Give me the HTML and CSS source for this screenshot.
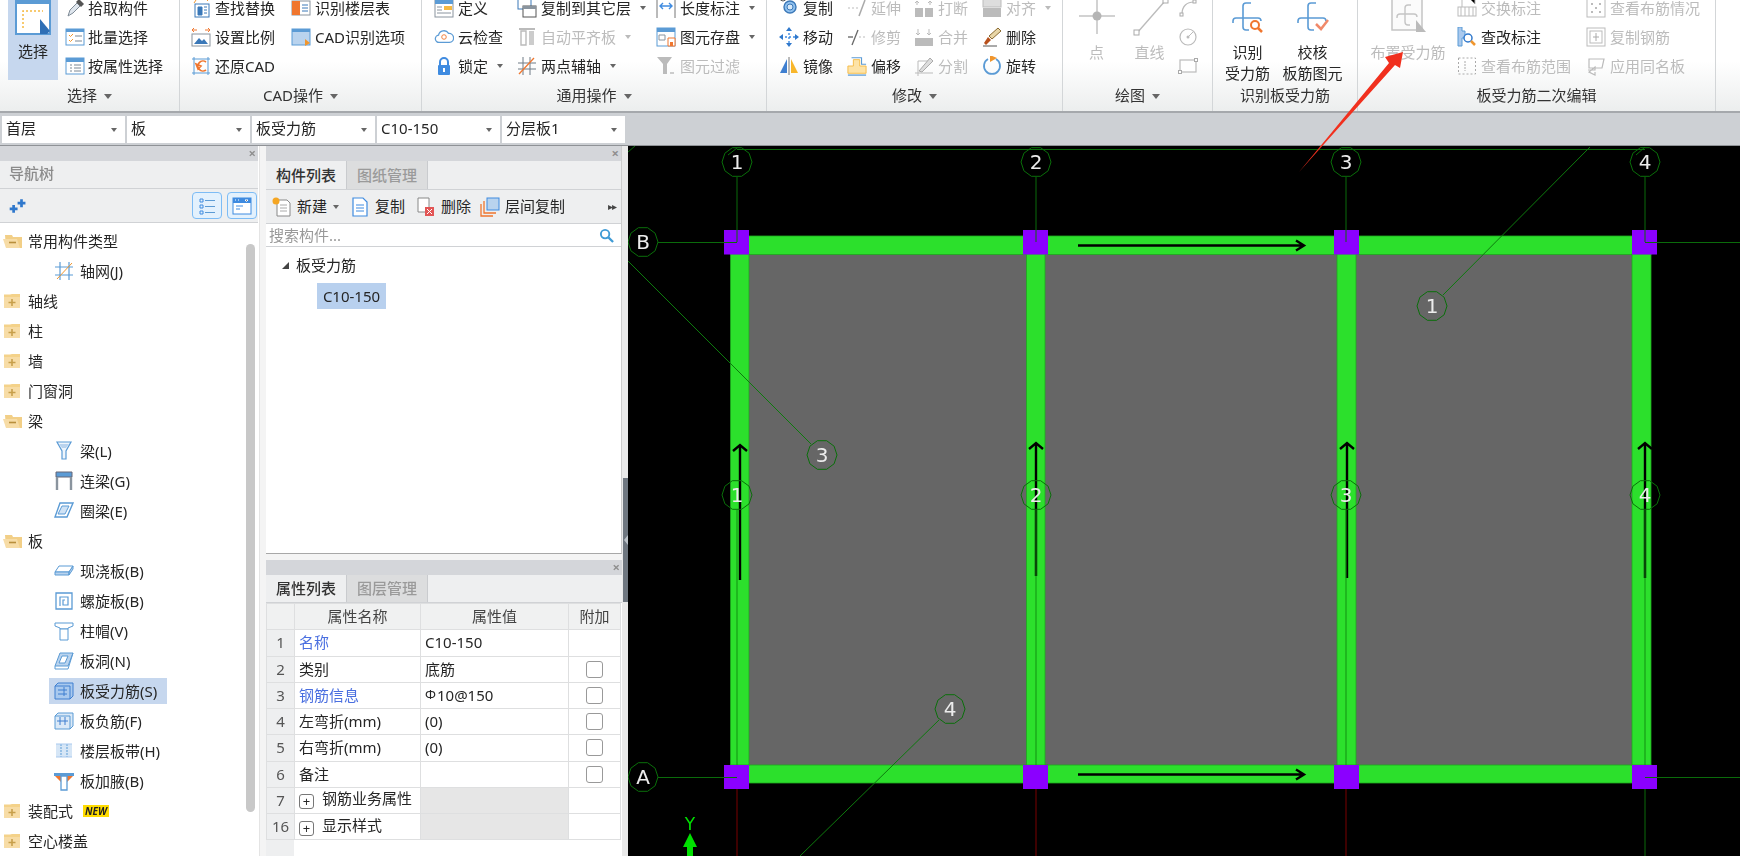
FILE: index.html
```html
<!DOCTYPE html>
<html lang="zh-CN">
<head>
<meta charset="utf-8">
<title>板受力筋</title>
<link rel="stylesheet" href="styles.css">
</head>
<body>
<svg class="sprite" width="0" height="0" aria-hidden="true">
<defs>
<symbol id="select" viewBox="0 0 36 36"><path d="M1-4h34v38H1z" fill="#fff" stroke="#5b9bd5" stroke-width="2"/><path d="M1-2h34v6H1z" fill="#5b9bd5"/><path d="M8 28V11h20" fill="none" stroke="#f5b942" stroke-width="1.5" stroke-dasharray="2 2"/><path d="M25 19l10 12-3 3h-7z" fill="#2f6fb5"/></symbol>
<symbol id="pick" viewBox="0 0 20 20"><path d="M3 18l2-6 7-7 3 3-7 7z" fill="#dfe6ee" stroke="#7f8b96"/><path d="M11 4l3-3 5 5-3 3z" fill="#555"/></symbol>
<symbol id="batch" viewBox="0 0 20 20"><rect x="1" y="2" width="18" height="16" fill="#fff" stroke="#5b9bd5"/><path d="M1 2h18v3H1z" fill="#5b9bd5"/><path d="M4 8l1.5 1.5L8 7M4 13l1.5 1.5L8 12" fill="none" stroke="#f0962e"/><path d="M10 9h7M10 14h7" stroke="#7b8793"/></symbol>
<symbol id="attr" viewBox="0 0 20 20"><rect x="1" y="2" width="18" height="16" fill="#fff" stroke="#5b9bd5"/><path d="M1 2h18v4H1z" fill="#5b9bd5"/><path d="M5 9h2M9 9h7M5 12h2M9 12h7M5 15h2M9 15h7" stroke="#7b8793"/></symbol>
<symbol id="find" viewBox="0 0 20 20"><path d="M5 1h14M3 5l2-3M15 1l2 2" stroke="#f0962e"/><rect x="4" y="6" width="14" height="13" fill="#fff" stroke="#3b78b8"/><path d="M7 9h4v8H7zM13 9h3M13 12h3M13 15h3" fill="#3b78b8" stroke="#3b78b8"/></symbol>
<symbol id="scale" viewBox="0 0 20 20"><path d="M1 3h5M3 1l-2 2 2 2M19 3h-5M17 1l2 2-2 2" fill="none" stroke="#f0762e"/><rect x="1" y="7" width="18" height="12" fill="#fff" stroke="#8a949e"/><path d="M3 17l5-6 3 3 2-2 4 5z" fill="#3b78b8"/></symbol>
<symbol id="restore" viewBox="0 0 20 20"><path d="M3 1v18M17 1v18M1 3h18M1 17h18" stroke="#5b9bd5"/><path d="M15 6a5 5 0 1 0 0 8M5 8l2 5 3-3z" fill="none" stroke="#f0762e" stroke-width="1.6"/></symbol>
<symbol id="floor" viewBox="0 0 20 20"><rect x="1" y="3" width="18" height="14" fill="#fff" stroke="#8a949e"/><rect x="1" y="3" width="8" height="14" fill="#f0762e"/><path d="M11 7h6M11 10h6M11 13h6" stroke="#3b78b8"/></symbol>
<symbol id="cadopt" viewBox="0 0 20 20"><rect x="1" y="2" width="18" height="16" fill="#b9d3ee" stroke="#5b9bd5"/><path d="M1 2h18v3H1z" fill="#5b9bd5"/><path d="M14 12l5 4-5 3z" fill="#f0962e"/></symbol>
<symbol id="define" viewBox="0 0 20 20"><rect x="1" y="1" width="18" height="18" fill="#fff" stroke="#8a949e"/><path d="M1 1h18v5H1z" fill="#5b9bd5"/><path d="M10 8h8v4h-8z" fill="#f5b942"/><path d="M3 9h5M3 12h5M3 15h14" stroke="#8a949e"/></symbol>
<symbol id="cloud" viewBox="0 0 22 20"><path d="M6 16a4 4 0 0 1-1-8 6 6 0 0 1 11-2 5 5 0 0 1 1 10z" fill="#fff" stroke="#5b9bd5" stroke-width="1.4"/><circle cx="11" cy="10" r="2.5" fill="none" stroke="#f0762e"/></symbol>
<symbol id="lock" viewBox="0 0 20 20"><path d="M6 9V6a4 4 0 0 1 8 0v3" fill="none" stroke="#3f8be0" stroke-width="2"/><rect x="4" y="9" width="12" height="10" rx="1" fill="#3f8be0"/><path d="M10 12v4" stroke="#fff" stroke-width="2"/></symbol>
<symbol id="copylayer" viewBox="0 0 20 20"><rect x="1" y="-2" width="13" height="13" fill="#fff" stroke="#3b78b8"/><rect x="6" y="8" width="13" height="11" fill="#fff" stroke="#555"/><path d="M6 8h13v3H6z" fill="#8a949e"/></symbol>
<symbol id="alignp" viewBox="0 0 20 20"><path d="M2 2h16" stroke="#bbb" stroke-width="2"/><path d="M4 4h5v14H4z" fill="none" stroke="#bbb" stroke-width="1.4"/><path d="M12 4h5v14h-5z" fill="#ccc"/></symbol>
<symbol id="twopoint" viewBox="0 0 20 20"><path d="M6 1v18M13 1v18M1 7h18M1 13h18" stroke="#6f7a85"/><path d="M2 18L17 2" stroke="#f0762e" stroke-width="1.3"/></symbol>
<symbol id="length" viewBox="0 0 20 20"><path d="M1 0v20M19 0v20" stroke="#777"/><path d="M4 8h12M7 5L4 8l3 3M13 5l3 3-3 3" fill="none" stroke="#3f8be0" stroke-width="1.4"/></symbol>
<symbol id="save" viewBox="0 0 20 20"><rect x="1" y="1" width="18" height="18" fill="#fff" stroke="#5b9bd5"/><path d="M1 1h18v4H1z" fill="#5b9bd5"/><path d="M3 8h6v5H3z" fill="none" stroke="#8a949e"/><path d="M12 11h7v8h-7z" fill="#fff" stroke="#f0762e"/><path d="M14 15h3v4h-3z" fill="#f0762e"/></symbol>
<symbol id="filter" viewBox="0 0 20 20"><path d="M1 1h15l-5 7v10H7V8z" fill="#bbb"/><path d="M14 17h4" stroke="#ccc" stroke-width="2"/></symbol>
<symbol id="copy" viewBox="0 0 20 20"><circle cx="4" cy="0" r="3" fill="none" stroke="#555"/><circle cx="11" cy="9" r="6" fill="#8fc0ee" stroke="#3b78b8" stroke-width="1.4"/><circle cx="11" cy="9" r="3" fill="#d6e8f8" stroke="#3b78b8"/><path d="M12 -1l3 3" stroke="#555"/></symbol>
<symbol id="move" viewBox="0 0 20 20"><path d="M10 2v16M2 10h16" stroke="#3f8be0" stroke-dasharray="2 2" stroke-width="1.4"/><path d="M10 0l3 4H7zM10 20l3-4H7zM0 10l4-3v6zM20 10l-4-3v6z" fill="#2f78cc"/></symbol>
<symbol id="mirror" viewBox="0 0 20 20"><path d="M1 17L8 3v14z" fill="#3f7fd0"/><path d="M12 3l7 14h-7z" fill="#f8b62b"/><path d="M10 1v18" stroke="#777"/></symbol>
<symbol id="extend" viewBox="0 0 20 20"><path d="M1 10h10" stroke="#bbb" stroke-dasharray="2 2"/><path d="M12 18L18 2" stroke="#aaa" stroke-width="1.5"/></symbol>
<symbol id="trim" viewBox="0 0 20 20"><path d="M1 10h5" stroke="#555" stroke-width="1.2"/><path d="M5 18L11 3" stroke="#666" stroke-width="1.3"/><path d="M12 10h7" stroke="#bbb" stroke-dasharray="2 2"/></symbol>
<symbol id="offset" viewBox="0 0 22 20"><path d="M7 3h7v7h7v8H1v-8h6z" fill="#fde3a7" stroke="#f5b942"/><path d="M5 1h11v7h5" fill="none" stroke="#5b9bd5" stroke-width="1.2"/><path d="M1 20h20" stroke="#5b9bd5" stroke-width="1.4"/></symbol>
<symbol id="break" viewBox="0 0 20 20"><path d="M1 10h8v9H1zM11 10h8v9h-8z" fill="#bbb"/><path d="M3 7V3M1 5l2-2 2 2M16 7V3M14 5l2-2 2 2" fill="none" stroke="#bbb"/></symbol>
<symbol id="merge" viewBox="0 0 20 20"><path d="M1 11h18v8H1z" fill="#bbb"/><path d="M4 2v6M2 6l2 2 2-2M15 2v6M13 6l2 2 2-2" fill="none" stroke="#bbb"/></symbol>
<symbol id="split" viewBox="0 0 20 20"><path d="M1 17h18M4 20V5l12 0" fill="none" stroke="#bbb"/><path d="M5 15L16 2l3 3L8 16z" fill="#ddd" stroke="#aaa"/></symbol>
<symbol id="alignr" viewBox="0 0 20 20"><rect x="1" y="-3" width="18" height="12" fill="#ddd" stroke="#bbb"/><rect x="1" y="10" width="18" height="9" fill="#bbb"/></symbol>
<symbol id="del" viewBox="0 0 20 20"><path d="M2 16l4-6 3 3-5 5z" fill="#b8501c"/><path d="M7 9L16 1l3 3-9 8z" fill="#e8d6a8" stroke="#8a6a30"/><path d="M1 19h14" stroke="#555"/></symbol>
<symbol id="rotate" viewBox="0 0 20 20"><path d="M6 3a8 8 0 1 0 8 0" fill="none" stroke="#5b9bd5" stroke-width="1.8"/><path d="M8-1l7 3-7 4z" fill="#f0962e"/></symbol>
<symbol id="point" viewBox="0 0 40 40"><path d="M20 0v36M2 18h36" stroke="#c4c4c4" stroke-width="1.5"/><circle cx="20" cy="18" r="4.5" fill="#b5b5b5"/></symbol>
<symbol id="sline" viewBox="0 0 40 40"><path d="M7 35L35 3" stroke="#bbb" stroke-width="1.3"/><rect x="4" y="32" width="5" height="5" fill="#fff" stroke="#aaa"/><rect x="33" y="0" width="5" height="5" fill="#fff" stroke="#aaa"/></symbol>
<symbol id="arcs" viewBox="0 0 20 20"><path d="M4 16C4 8 9 4 16 4" fill="none" stroke="#bbb" stroke-width="1.2"/><rect x="2" y="15" width="3" height="3" fill="#fff" stroke="#aaa"/><rect x="15" y="2" width="3" height="3" fill="#fff" stroke="#aaa"/></symbol>
<symbol id="circ" viewBox="0 0 20 20"><circle cx="10" cy="10" r="8" fill="none" stroke="#bbb" stroke-width="1.2"/><circle cx="10" cy="10" r="1.5" fill="#bbb"/><path d="M10 10l5-5" stroke="#bbb"/></symbol>
<symbol id="rrect" viewBox="0 0 20 20"><rect x="2" y="4" width="16" height="12" fill="#fff" stroke="#bbb" stroke-width="1.2"/><rect x="0.5" y="14.5" width="3" height="3" fill="#fff" stroke="#aaa"/><rect x="16.5" y="2.5" width="3" height="3" fill="#fff" stroke="#aaa"/></symbol>
<symbol id="recog" viewBox="0 0 34 34"><path d="M20 3h-5a3 3 0 0 0-3 3v21a3 3 0 0 0 3 3h3M2 23v-2a3 3 0 0 1 3-3h22a3 3 0 0 1 3 3" fill="none" stroke="#5b9bd5" stroke-width="1.6"/></symbol>
<symbol id="layout" viewBox="0 0 36 36"><rect x="2" y="1" width="30" height="31" fill="#fbfbfb" stroke="#c5c5c5" stroke-width="1.5"/><g fill="none" stroke="#c5c5c5" stroke-width="1.4"><path d="M21 7h-3a3 3 0 0 0-3 3v14a3 3 0 0 0 3 3h2M7 20v-1a3 3 0 0 1 3-3h14a3 3 0 0 1 3 3"/></g><path d="M26 22l10 12H26z" fill="#bbb"/></symbol>
<symbol id="swap" viewBox="0 0 20 20"><rect x="1" y="9" width="18" height="9" fill="#fff" stroke="#bbb"/><path d="M4 9v9M8 9v9M12 9v9M16 9v9M5 1v8M13 1h5v5" stroke="#bbb"/></symbol>
<symbol id="editmark" viewBox="0 0 20 20"><path d="M1 0h4v4h3v7H5v8H1z" fill="#a9c9ee" stroke="#5b9bd5"/><circle cx="11" cy="11" r="4" fill="#fff" stroke="#2f78cc" stroke-width="1.5"/><path d="M14 14l4 4" stroke="#f0962e" stroke-width="2.5"/></symbol>
<symbol id="range" viewBox="0 0 20 20"><rect x="1.5" y="2" width="17" height="16" fill="none" stroke="#aaa" stroke-dasharray="2 2"/><path d="M8 5v10" stroke="#aaa" stroke-dasharray="2 1"/></symbol>
<symbol id="view" viewBox="0 0 20 20"><rect x="1" y="1" width="18" height="18" fill="#fff" stroke="#bbb"/><path d="M5 5h2v2H5zM13 5h2v2h-2zM9 9h2v2H9zM5 13h2v2H5zM13 13h2v2h-2z" fill="#bbb"/></symbol>
<symbol id="copyrebar" viewBox="0 0 20 20"><rect x="1" y="1" width="18" height="18" fill="#fff" stroke="#bbb"/><rect x="4" y="4" width="12" height="12" fill="none" stroke="#bbb"/><path d="M10 6v8M7 10h6" stroke="#aaa"/></symbol>
<symbol id="apply" viewBox="0 0 20 20"><path d="M3 3h15l-2 9H3zM2 14h7v-3l-6 5 6 3v-3" fill="#fff" stroke="#bbb" stroke-width="1.2"/></symbol>
<symbol id="plus2" viewBox="0 0 16 16"><path d="M5 7v7M1.500 10.500h7M12 2v7M8.500 5.500h7" stroke="#2f78cc" stroke-width="2.400"/></symbol>
<symbol id="listv" viewBox="0 0 20 20"><path d="M3 3h3v3H3zM3 9h3v3H3zM3 15h3v3H3z" fill="none" stroke="#3f8be0"/><path d="M8 4.500h10M8 10.500h10M8 16.500h10" stroke="#5b9bd5"/></symbol>
<symbol id="winv" viewBox="0 0 20 20"><rect x="1" y="2" width="18" height="16" fill="#fff" stroke="#3f8be0"/><path d="M1 2h18v5H1z" fill="#3f8be0"/><path d="M4 10h7M4 13h4" stroke="#3f8be0"/><path d="M3 4h1M6 4h1M13 4h3l-1.500 1.500z" stroke="#fff"/></symbol>
<symbol id="fopen" viewBox="0 0 20 16"><path d="M2 2h7l1 2h9v11H3z" fill="#f2cf87"/><path d="M0 6h14l3 9H3z" fill="#f7dca6"/><path d="M6 9.500h7" stroke="#b98f3c" stroke-width="1.6"/></symbol>
<symbol id="fclosed" viewBox="0 0 18 16"><path d="M1 3V1.500h6L9 1h8v14H1z" fill="#f4d28a"/><path d="M1 4h16v11H1z" fill="#f7dca6"/><path d="M9 6v7M5.500 9.500h7" stroke="#c79f4b" stroke-width="1.6"/></symbol>
<symbol id="t-grid" viewBox="0 0 20 20"><path d="M6 1v18M15 1v18M1 6h18M1 14h18" stroke="#5b9bd5" stroke-width="1.2"/><path d="M3 18L18 2" stroke="#f0962e"/></symbol>
<symbol id="t-beam" viewBox="0 0 20 20"><path d="M3 1h14l-5 9v8H8v-8z" fill="#eef5fc" stroke="#5b9bd5" stroke-width="1.2"/><path d="M5 3h10l-3 4H8z" fill="#b9d3ee"/></symbol>
<symbol id="t-lintel" viewBox="0 0 20 20"><path d="M2 1h16v5H2z" fill="#5b9bd5" stroke="#667"/><path d="M3 6v13M17 6v13" stroke="#8a949e" stroke-width="2.4"/></symbol>
<symbol id="t-ring" viewBox="0 0 20 20"><path d="M6 2h13l-6 14H1z" fill="#fff" stroke="#5b9bd5" stroke-width="1.4"/><path d="M8 5h7l-4 8H4z" fill="#cfe2f5" stroke="#5b9bd5"/></symbol>
<symbol id="t-slab" viewBox="0 0 20 20"><path d="M5 5h14l-4 6H1z" fill="#fff" stroke="#5b9bd5"/><path d="M1 11h14v3H1zM15 11l4-6v3l-4 6z" fill="#b9d3ee" stroke="#5b9bd5"/></symbol>
<symbol id="t-spiral" viewBox="0 0 20 20"><path d="M2 2h16v16H2z" fill="#fff" stroke="#5b9bd5" stroke-width="1.3"/><path d="M6 15V6h8v8H9V9h2" fill="none" stroke="#5b9bd5" stroke-width="1.2"/></symbol>
<symbol id="t-cap" viewBox="0 0 20 20"><path d="M1 2h18v3l-5 2v1H6V7L1 5z" fill="#fff" stroke="#5b9bd5"/><path d="M6 8h8v11H6z" fill="#fff" stroke="#5b9bd5"/></symbol>
<symbol id="t-hole" viewBox="0 0 20 20"><path d="M6 2h13l-5 13H1z" fill="#b9d3ee" stroke="#5b9bd5"/><path d="M8 5h6l-3 7H5z" fill="#fff" stroke="#5b9bd5"/><path d="M1 15v3h13l5-16" fill="none" stroke="#5b9bd5"/></symbol>
<symbol id="t-main" viewBox="0 0 20 20"><path d="M1 5l3-3h15v13l-3 3H1z" fill="#a9c9ee" stroke="#3f7fd0"/><path d="M1 5h15v13" fill="none" stroke="#3f7fd0"/><path d="M4 9h9M4 13h9M10 6v9" stroke="#3f7fd0"/></symbol>
<symbol id="t-neg" viewBox="0 0 20 20"><path d="M1 5l3-3h15v13l-3 3H1z" fill="#dbe9f7" stroke="#5b9bd5"/><path d="M1 5h15v13" fill="none" stroke="#5b9bd5"/><path d="M6 6v8M11 6v8M3 10h11" stroke="#3f7fd0"/></symbol>
<symbol id="t-strip" viewBox="0 0 20 20"><path d="M2 3h16v13H2z" fill="#d6e6f6"/><path d="M7 3v13M13 3v13" stroke="#5b9bd5" stroke-dasharray="2 1"/><path d="M2 3h16M2 16h16" stroke="#a9c9ee"/></symbol>
<symbol id="t-haunch" viewBox="0 0 20 20"><path d="M0 2h20v3H0z" fill="#5b9bd5"/><path d="M1 5h18l-6 6V5H7v6z" fill="#f0762e"/><path d="M7 5h6v14H7z" fill="#fff" stroke="#5b9bd5" stroke-width="1.3"/></symbol>
<symbol id="n-new" viewBox="0 0 20 20"><path d="M5 3h10l3 3v13H5z" fill="#fff" stroke="#888"/><path d="M8 8h7M8 11h7M8 14h7" stroke="#aaa"/><circle cx="4" cy="4" r="3.500" fill="#f5a623"/></symbol>
<symbol id="n-copy" viewBox="0 0 20 20"><path d="M3 1h10l4 4v14H3z" fill="#fff" stroke="#3f8be0" stroke-width="1.2"/><path d="M6 8h8M6 11h8M6 14h8" stroke="#3f8be0"/></symbol>
<symbol id="n-del" viewBox="0 0 20 20"><path d="M2 1h11v14H2z" fill="#fff" stroke="#888"/><rect x="9" y="10" width="9" height="9" fill="#e25555"/><path d="M11 12l5 5M16 12l-5 5" stroke="#fff"/></symbol>
<symbol id="n-layer" viewBox="0 0 20 20"><path d="M1 7v12h12M4 4v12h12" fill="none" stroke="#f0762e" stroke-width="1.3"/><rect x="7" y="1" width="12" height="12" fill="#b9d3ee" stroke="#3f8be0"/></symbol>
<symbol id="search" viewBox="0 0 16 16"><circle cx="6.500" cy="6.500" r="4.500" fill="none" stroke="#3f9bd5" stroke-width="2"/><path d="M10 10l5 5" stroke="#3f9bd5" stroke-width="2.400"/></symbol>
<symbol id="bubble" viewBox="-16 -16 32 32"><polygon points="15,0 12.100,8.800 4.600,14.300 -4.600,14.300 -12.100,8.800 -15,0 -12.100,-8.800 -4.600,-14.300 4.600,-14.300 12.100,-8.800" fill="none" stroke="#0a6f0a"/></symbol>
</defs>
</svg>

<div class="app">
  <header class="ribbon">
    <section class="group g1">
      <div class="body">
        <div class="bigsel"><svg class="selicon"><use href="#select"/></svg><span>选择</span></div>
        <div class="cols">
          <div class="col">
            <div class="item"><svg class="ic"><use href="#pick"/></svg>拾取构件</div>
            <div class="item"><svg class="ic"><use href="#batch"/></svg>批量选择</div>
            <div class="item"><svg class="ic"><use href="#attr"/></svg>按属性选择</div>
          </div>
        </div>
      </div>
      <div class="label">选择<i class="caret"></i></div>
    </section>
    <section class="group g2">
      <div class="body">
        <div class="cols">
          <div class="col w100">
            <div class="item"><svg class="ic"><use href="#find"/></svg>查找替换</div>
            <div class="item"><svg class="ic"><use href="#scale"/></svg>设置比例</div>
            <div class="item"><svg class="ic"><use href="#restore"/></svg>还原CAD</div>
          </div>
          <div class="col">
            <div class="item"><svg class="ic"><use href="#floor"/></svg>识别楼层表</div>
            <div class="item"><svg class="ic"><use href="#cadopt"/></svg>CAD识别选项</div>
          </div>
        </div>
      </div>
      <div class="label">CAD操作<i class="caret"></i></div>
    </section>
    <section class="group g3">
      <div class="body">
        <div class="cols">
          <div class="col w83">
            <div class="item"><svg class="ic"><use href="#define"/></svg>定义</div>
            <div class="item"><svg class="ic"><use href="#cloud"/></svg>云检查</div>
            <div class="item"><svg class="ic"><use href="#lock"/></svg>锁定<i class="caret sm"></i></div>
          </div>
          <div class="col w139">
            <div class="item"><svg class="ic"><use href="#copylayer"/></svg>复制到其它层<i class="caret sm"></i></div>
            <div class="item off"><svg class="ic"><use href="#alignp"/></svg>自动平齐板<i class="caret sm"></i></div>
            <div class="item"><svg class="ic"><use href="#twopoint"/></svg>两点辅轴<i class="caret sm"></i></div>
          </div>
          <div class="col">
            <div class="item"><svg class="ic"><use href="#length"/></svg>长度标注<i class="caret sm"></i></div>
            <div class="item"><svg class="ic"><use href="#save"/></svg>图元存盘<i class="caret sm"></i></div>
            <div class="item off"><svg class="ic"><use href="#filter"/></svg>图元过滤</div>
          </div>
        </div>
      </div>
      <div class="label">通用操作<i class="caret"></i></div>
    </section>
    <section class="group g4">
      <div class="body">
        <div class="cols">
          <div class="col w68">
            <div class="item"><svg class="ic"><use href="#copy"/></svg>复制</div>
            <div class="item"><svg class="ic"><use href="#move"/></svg>移动</div>
            <div class="item"><svg class="ic"><use href="#mirror"/></svg>镜像</div>
          </div>
          <div class="col w67">
            <div class="item off"><svg class="ic"><use href="#extend"/></svg>延伸</div>
            <div class="item off"><svg class="ic"><use href="#trim"/></svg>修剪</div>
            <div class="item"><svg class="ic"><use href="#offset"/></svg>偏移</div>
          </div>
          <div class="col w68">
            <div class="item off"><svg class="ic"><use href="#break"/></svg>打断</div>
            <div class="item off"><svg class="ic"><use href="#merge"/></svg>合并</div>
            <div class="item off"><svg class="ic"><use href="#split"/></svg>分割</div>
          </div>
          <div class="col">
            <div class="item off"><svg class="ic"><use href="#alignr"/></svg>对齐<i class="caret sm"></i></div>
            <div class="item"><svg class="ic"><use href="#del"/></svg>删除</div>
            <div class="item"><svg class="ic"><use href="#rotate"/></svg>旋转</div>
          </div>
        </div>
      </div>
      <div class="label">修改<i class="caret"></i></div>
    </section>
    <section class="group g5">
      <div class="body">
        <div class="big off w53"><svg class="bigic"><use href="#point"/></svg><span>点</span></div>
        <div class="big off w53"><svg class="bigic"><use href="#sline"/></svg><span>直线</span></div>
        <div class="col small">
          <div class="item"><svg class="ic"><use href="#arcs"/></svg></div>
          <div class="item"><svg class="ic"><use href="#circ"/></svg></div>
          <div class="item"><svg class="ic"><use href="#rrect"/></svg></div>
        </div>
      </div>
      <div class="label">绘图<i class="caret"></i></div>
    </section>
    <section class="group g6">
      <div class="body">
        <div class="big w65"><svg class="bigic"><use href="#recog"/><circle cx="24" cy="25" r="4" fill="#fff" stroke="#f0762e" stroke-width="2"/><path d="M27 28l4 4" stroke="#f0762e" stroke-width="2.500"/></svg><span>识别<br>受力筋</span></div>
        <div class="big w65"><svg class="bigic"><use href="#recog"/><path d="M20 24l5 5 7-9" fill="none" stroke="#f0896a" stroke-width="2.500"/></svg><span>校核<br>板筋图元</span></div>
      </div>
      <div class="label">识别板受力筋</div>
    </section>
    <section class="group g7">
      <div class="body">
        <div class="big off w80"><svg class="bigic"><use href="#layout"/></svg><span>布置受力筋</span></div>
        <div class="cols">
          <div class="col w129">
            <div class="item off"><svg class="ic"><use href="#swap"/></svg>交换标注</div>
            <div class="item"><svg class="ic"><use href="#editmark"/></svg>查改标注</div>
            <div class="item off"><svg class="ic"><use href="#range"/></svg>查看布筋范围</div>
          </div>
          <div class="col">
            <div class="item off"><svg class="ic"><use href="#view"/></svg>查看布筋情况</div>
            <div class="item off"><svg class="ic"><use href="#copyrebar"/></svg>复制钢筋</div>
            <div class="item off"><svg class="ic"><use href="#apply"/></svg>应用同名板</div>
          </div>
        </div>
      </div>
      <div class="label">板受力筋二次编辑</div>
    </section>
  </header>

  <div class="selbar">
    <div class="drop">首层<i class="caret sm"></i></div>
    <div class="drop">板<i class="caret sm"></i></div>
    <div class="drop">板受力筋<i class="caret sm"></i></div>
    <div class="drop">C10-150<i class="caret sm"></i></div>
    <div class="drop">分层板1<i class="caret sm"></i></div>
  </div>

  <main class="work">
    <aside class="nav">
      <div class="titlebar"><span class="close">×</span></div>
      <div class="navhead">导航树</div>
      <div class="navtools">
        <svg class="plus2"><use href="#plus2"/></svg>
        <span class="toggle first"><svg class="ic"><use href="#listv"/></svg></span>
        <span class="toggle"><svg class="ic"><use href="#winv"/></svg></span>
      </div>
      <div class="tree">
        <div class="scroll"></div>
        <div class="row"><svg class="fo"><use href="#fopen"/></svg>常用构件类型</div>
        <div class="row sub"><svg class="ic"><use href="#t-grid"/></svg>轴网(J)</div>
        <div class="row"><svg class="fc"><use href="#fclosed"/></svg>轴线</div>
        <div class="row"><svg class="fc"><use href="#fclosed"/></svg>柱</div>
        <div class="row"><svg class="fc"><use href="#fclosed"/></svg>墙</div>
        <div class="row"><svg class="fc"><use href="#fclosed"/></svg>门窗洞</div>
        <div class="row"><svg class="fo"><use href="#fopen"/></svg>梁</div>
        <div class="row sub"><svg class="ic"><use href="#t-beam"/></svg>梁(L)</div>
        <div class="row sub"><svg class="ic"><use href="#t-lintel"/></svg>连梁(G)</div>
        <div class="row sub"><svg class="ic"><use href="#t-ring"/></svg>圈梁(E)</div>
        <div class="row"><svg class="fo"><use href="#fopen"/></svg>板</div>
        <div class="row sub"><svg class="ic"><use href="#t-slab"/></svg>现浇板(B)</div>
        <div class="row sub"><svg class="ic"><use href="#t-spiral"/></svg>螺旋板(B)</div>
        <div class="row sub"><svg class="ic"><use href="#t-cap"/></svg>柱帽(V)</div>
        <div class="row sub"><svg class="ic"><use href="#t-hole"/></svg>板洞(N)</div>
        <div class="row sub"><span class="selrow"><svg class="ic"><use href="#t-main"/></svg>板受力筋(S)</span></div>
        <div class="row sub"><svg class="ic"><use href="#t-neg"/></svg>板负筋(F)</div>
        <div class="row sub"><svg class="ic"><use href="#t-strip"/></svg>楼层板带(H)</div>
        <div class="row sub"><svg class="ic"><use href="#t-haunch"/></svg>板加腋(B)</div>
        <div class="row"><svg class="fc"><use href="#fclosed"/></svg>装配式<span class="new">NEW</span></div>
        <div class="row"><svg class="fc"><use href="#fclosed"/></svg>空心楼盖</div>
      </div>
    </aside>

    <div class="mid">
      <section class="panel list">
        <div class="titlebar"><span class="close">×</span></div>
        <div class="tabs"><span class="tab on">构件列表</span><span class="tab">图纸管理</span></div>
        <div class="tools">
          <svg class="ic"><use href="#n-new"/></svg><span class="t1">新建<i class="caret sm"></i></span>
          <svg class="ic"><use href="#n-copy"/></svg><span class="t2">复制</span>
          <svg class="ic"><use href="#n-del"/></svg><span class="t2 t2b">删除</span>
          <svg class="ic"><use href="#n-layer"/></svg><span class="t3">层间复制</span>
          <span class="more">▸▸</span>
        </div>
        <div class="searchbox"><span>搜索构件...</span><svg class="sic"><use href="#search"/></svg></div>
        <div class="ltree">
          <div class="lroot"><i class="tri"></i>板受力筋</div>
          <div class="lsel">C10-150</div>
        </div>
      </section>
      <section class="panel props">
        <div class="titlebar"><span class="close">×</span></div>
        <div class="tabs"><span class="tab on">属性列表</span><span class="tab">图层管理</span></div>
        <table class="ptable">
          <colgroup><col class="c0"><col class="c1"><col class="c2"><col class="c3"></colgroup>
          <thead><tr><th></th><th>属性名称</th><th>属性值</th><th>附加</th></tr></thead>
          <tbody>
            <tr><th>1</th><td class="link">名称</td><td>C10-150</td><td></td></tr>
            <tr><th>2</th><td>类别</td><td>底筋</td><td class="ck"><i class="box"></i></td></tr>
            <tr><th>3</th><td class="link">钢筋信息</td><td><span class="rebar">Φ</span>10@150</td><td class="ck"><i class="box"></i></td></tr>
            <tr><th>4</th><td>左弯折(mm)</td><td>(0)</td><td class="ck"><i class="box"></i></td></tr>
            <tr><th>5</th><td>右弯折(mm)</td><td>(0)</td><td class="ck"><i class="box"></i></td></tr>
            <tr><th>6</th><td>备注</td><td></td><td class="ck"><i class="box"></i></td></tr>
            <tr><th>7</th><td><i class="pbox">+</i>钢筋业务属性</td><td class="dim"></td><td></td></tr>
            <tr><th>16</th><td><i class="pbox">+</i>显示样式</td><td class="dim"></td><td></td></tr>
          </tbody>
        </table>
        <div class="pfoot"><span></span></div>
      </section>
    </div>

    <div class="split"><div class="grip"><i></i></div></div>

    <svg class="cad" viewBox="628 146 1112 710">
      <rect x="628" y="146" width="1112" height="710" fill="#000"/>
      <rect x="749" y="254" width="883" height="511" fill="#666"/>
      <g fill="#2ce02c" stroke="#1fa81f" stroke-width="0.8">
        <rect x="731" y="236" width="920" height="18.500"/>
        <rect x="731" y="765" width="920" height="18"/>
        <rect x="730.500" y="254" width="18.500" height="511"/>
        <rect x="1026.500" y="254" width="18.500" height="511"/>
        <rect x="1337" y="254" width="19" height="511"/>
        <rect x="1632" y="254" width="19" height="511"/>
      </g>
      <g fill="#8b00ff">
        <rect x="724" y="230" width="25" height="24.500"/><rect x="1023" y="230" width="25" height="24.500"/><rect x="1334" y="230" width="25" height="24.500"/><rect x="1632" y="230" width="25" height="24.500"/>
        <rect x="724" y="765" width="25" height="24"/><rect x="1023" y="765" width="25" height="24"/><rect x="1334" y="765" width="25" height="24"/><rect x="1632" y="765" width="25" height="24"/>
      </g>
      <g stroke="#000" stroke-width="2.400" fill="none">
        <path d="M1078 245.500H1304M1296 240.500l8 5-8 5"/>
        <path d="M1078 774.500H1304M1296 769.500l8 5-8 5"/>
        <path d="M740 580V445M733 451l7-6 7 6"/>
        <path d="M1036 576V443M1029 449l7-6 7 6"/>
        <path d="M1347 578V443M1340 449l7-6 7 6"/>
        <path d="M1645 578V443M1638 449l7-6 7 6"/>
      </g>
      <g stroke="#0b6b0b" fill="none" stroke-width="1">
        <path d="M737 149.500H1645M737 177V242M1036 177V242M1346 177V242M1645 177V242M658 242.500H737M1645 242.500H1740M658 777.500H737M1645 777.500H1740M1645 789V856"/>
        <path d="M628 152l7-6M728 155l9-7M1636 155l9-8"/>
        <path d="M737 510V765M1036 510V765M1346 510V765M1645 510V765" stroke="#109010"/>
      </g>
      <g stroke="#7a0000" fill="none"><path d="M737 789V856M1036 789V856M1346 789V856"/></g>
      <g stroke="#0d7a0d" fill="none"><path d="M1443 295L1590 147M811 444L628 261M939 720L800 856"/></g>
      <g>
        <use href="#bubble" x="721" y="146" width="32" height="32"/><use href="#bubble" x="1020" y="146" width="32" height="32"/><use href="#bubble" x="1330" y="146" width="32" height="32"/><use href="#bubble" x="1629" y="146" width="32" height="32"/>
        <use href="#bubble" x="627" y="226" width="32" height="32"/><use href="#bubble" x="627" y="761" width="32" height="32"/>
        <use href="#bubble" x="721" y="479" width="32" height="32"/><use href="#bubble" x="1020" y="479" width="32" height="32"/><use href="#bubble" x="1330" y="479" width="32" height="32"/><use href="#bubble" x="1629" y="479" width="32" height="32"/>
        <use href="#bubble" x="1416" y="290" width="32" height="32"/><use href="#bubble" x="806" y="439" width="32" height="32"/><use href="#bubble" x="934" y="693" width="32" height="32"/>
      </g>
      <g class="axn">
        <text x="737" y="168.500">1</text><text x="1036" y="168.500">2</text><text x="1346" y="168.500">3</text><text x="1645" y="168.500">4</text>
        <text x="643" y="249">B</text><text x="643" y="784">A</text>
        <text x="737" y="502">1</text><text x="1036" y="502">2</text><text x="1346" y="502">3</text><text x="1645" y="502">4</text>
        <text x="1432" y="313">1</text><text x="822" y="462">3</text><text x="950" y="716">4</text>
      </g>
      <text class="yaxis" x="690" y="830">Y</text>
      <path d="M690 833l7 14h-4v9h-6v-9h-4z" fill="#00e000"/>
    </svg>
  </main>

  <svg class="annot" viewBox="0 0 1740 856"><polygon points="1299,172 1389,63 1385,57 1403,52 1400,68 1395,65" fill="#f1301e"/></svg>
</div>
</body>
</html>
```

FILE: styles.css
```css
* { box-sizing: border-box; }
html, body { margin: 0; padding: 0; }
body {
  width: 1740px;
  height: 856px;
  overflow: hidden;
  background: #fff;
  color: #262626;
  font-family: "Noto Sans", "Noto Sans CJK SC", sans-serif;
  font-size: 15px;
  line-height: 1;
}
.sprite { position: absolute; }
.app { position: relative; width: 1740px; height: 856px; display: flex; flex-direction: column; filter: blur(0.35px); }
svg { display: block; flex: none; overflow: hidden; }
i { font-style: normal; }

/* ribbon */
.ribbon {
  height: 113px;
  display: flex;
  flex: none;
  overflow: hidden;
  background: linear-gradient(#ffffff 55%, #eceeee);
  border-bottom: 2px solid #a5a8ac;
}
.group { position: relative; height: 111px; flex: none; display: flex; flex-direction: column; border-right: 1px solid #d3d6d8; }
.g1 { width: 180px; }
.g2 { width: 242px; }
.g3 { width: 345px; }
.g4 { width: 296px; }
.g5 { width: 150px; }
.g6 { width: 145px; }
.g7 { width: 358px; }
.body { height: 85px; display: flex; flex: none; overflow: hidden; }
.g1 .body { padding-left: 8px; }
.g2 .body { padding-left: 11px; }
.g3 .body, .g4 .body { padding-left: 12px; }
.g5 .body { padding-left: 7px; }
.g6 .body { padding-left: 2px; }
.g7 .body { padding-left: 10px; }
.label { height: 26px; display: flex; align-items: flex-start; justify-content: center; gap: 7px; padding-top: 3px; font-size: 15px; color: #333; }
.caret { display: inline-block; width: 0; height: 0; margin-top: 6px; border: 4.5px solid transparent; border-top: 5px solid #666; border-bottom: 0; }
.caret.sm { margin: 0 0 0 5px; border-width: 4px 3.5px 0; border-color: #666 transparent transparent; }
.cols { display: flex; }
.col { display: flex; flex-direction: column; flex: none; }
.g1 .cols { margin-left: 7px; }
.g1 .item { gap: 3px; }
.g7 .cols { margin-left: 9px; }
.w100 { width: 100px; }
.w83 { width: 83px; }
.w139 { width: 139px; }
.w68 { width: 68px; }
.w67 { width: 67px; }
.w129 { width: 129px; }
.item { height: 29px; display: flex; align-items: center; gap: 4px; white-space: nowrap; }
.item:first-child { height: 16px; margin-bottom: 6.5px; }
.ic { width: 20px; height: 20px; }
.off { color: #bcbcbc; }
.off .caret.sm { border-top-color: #bbb; }
.bigsel { width: 50px; height: 80px; background: #c6d7ee; display: flex; flex-direction: column; align-items: center; }
.selicon { width: 36px; height: 36px; }
.bigsel span { margin-top: 8px; }
.big { display: flex; flex-direction: column; align-items: center; text-align: center; flex: none; }
.big span { line-height: 21px; white-space: nowrap; }
.bigic { width: 34px; height: 34px; margin-bottom: 8px; }
.g5 .bigic { width: 40px; height: 40px; margin: -2px 0 4px; }
.g7 .bigic { width: 36px; height: 36px; margin: -2px 0 8px; }
.w53 { width: 53px; }
.w65 { width: 65px; }
.w80 { width: 80px; }
.col.small { margin-left: 2px; }

/* selector bar */
.selbar { height: 33px; flex: none; display: flex; gap: 2px; padding: 3px 2px 0; background: #cdd0d4; border-bottom: 1px solid #8f9296; }
.drop { width: 123px; height: 27px; background: #fff; display: flex; align-items: center; justify-content: space-between; padding: 0 8px 2px 4px; }
.drop .caret.sm { margin: 2px 0 0; }

/* work area */
.work { flex: 1; display: flex; min-height: 0; }
.titlebar { height: 15px; background: #d4d6da; position: relative; flex: none; }
.close { position: absolute; right: 2px; top: 0; color: #8f8f8f; font-size: 13px; font-weight: 700; line-height: 15px; }

.nav { width: 260px; flex: none; display: flex; flex-direction: column; border-right: 1px solid #e4e4e4; }
.nav > * { margin-right: 1px; }
.navhead { height: 28px; background: #eeeff0; border-bottom: 1px solid #d0d2d5; display: flex; align-items: center; padding: 0 0 2px 9px; color: #8b8b8b; font-weight: 500; }
.navtools { height: 34px; background: #eeeff0; border-bottom: 1px solid #d0d2d5; display: flex; align-items: center; padding: 0 1px 0 8px; gap: 5px; }
.plus2 { width: 18px; height: 18px; }
.toggle { width: 30px; height: 27px; border: 1px solid #7dbcf5; border-radius: 4px; background: #e3f1fd; display: flex; align-items: center; justify-content: center; }
.toggle.first { margin-left: auto; }
.tree { position: relative; flex: 1; background: #fff; padding-top: 3px; overflow: hidden; }
.scroll { position: absolute; left: 246px; top: 21px; width: 9px; height: 568px; border-radius: 5px; background: #c8c8c8; }
.row { height: 30px; display: flex; align-items: center; padding-left: 3px; white-space: nowrap; }
.fo { width: 20px; height: 16px; margin-right: 5px; }
.fc { width: 18px; height: 16px; margin-right: 7px; }
.sub { padding-left: 54px; gap: 6px; }
.selrow { display: flex; align-items: center; gap: 6px; height: 26px; width: 118px; margin-left: -5px; padding-left: 5px; background: #c6d7ee; }
.new { margin-left: 10px; padding: 1px 2px; background: #ffdc00; color: #222; font-size: 10px; font-weight: 700; font-style: italic; line-height: 10px; }

.mid { width: 362px; flex: none; display: flex; flex-direction: column; gap: 6px; padding-left: 6px; background: #f4f4f4; }
.panel { display: flex; flex-direction: column; overflow: hidden; background: #fff; flex: none; }
.list { height: 408px; border-bottom: 1px solid #a8a8a8; border-right: 1px solid #ccc; }
.props { height: 296px; }
.tabs { height: 29px; flex: none; display: flex; background: #eeeff0; border-bottom: 1px solid #d0d2d5; }
.props .tabs { height: 28px; }
.tab { width: 81px; display: flex; align-items: center; justify-content: center; background: #dcddde; color: #9a9a9a; font-weight: 500; border-right: 1px solid #c9cbce; }
.tab.on { background: #eeeff0; color: #333; }
.tools { height: 34px; flex: none; background: #eeeff0; border-bottom: 1px solid #d0d2d5; display: flex; align-items: center; padding-left: 6px; white-space: nowrap; }
.t1 { margin: 0 11px 0 5px; display: flex; align-items: center; }
.t1 .caret.sm { margin-left: 6px; }
.t2 { margin: 0 11px 0 5px; }
.t2b { margin-right: 9px; }
.t3 { margin-left: 5px; }
.more { margin-left: auto; margin-right: 5px; font-family: "DejaVu Sans", sans-serif; font-size: 10px; color: #444; letter-spacing: -1px; }
.searchbox { height: 23px; flex: none; display: flex; align-items: center; justify-content: space-between; padding: 0 7px 0 3px; color: #999; border-bottom: 1px solid #d0d2d5; }
.sic { width: 15px; height: 15px; }
.ltree { flex: 1; padding-top: 8px; }
.lroot { display: flex; align-items: center; height: 20px; padding-left: 16px; }
.tri { width: 0; height: 0; margin-right: 7px; border-style: solid; border-width: 0 0 7px 7px; border-color: transparent transparent #444; }
.lsel { width: 69px; height: 26px; margin: 8px 0 0 51px; background: #b8d0ee; display: flex; align-items: center; justify-content: center; }

.ptable { width: 354px; border-collapse: collapse; table-layout: fixed; flex: none; }
.c0 { width: 28px; }
.c1 { width: 126px; }
.c2 { width: 148px; }
.c3 { width: 52px; }
.ptable th, .ptable td { height: 26.25px; padding: 0; border: 1px solid #dedfe0; font-weight: 400; white-space: nowrap; }
.ptable td { padding-left: 4px; }
.ptable th { background: #eeeff0; color: #555; text-align: center; }
.ptable thead th { color: #444; background: #f0f1f1; }
.link { color: #4a6fe0; }
.dim { background: #e6e6e6; }
.ptable .ck { padding: 0; }
.box { display: block; width: 17px; height: 17px; margin: 0 auto; border: 1px solid #999; border-radius: 3px; background: #fff; }
.pbox { display: inline-block; width: 15px; height: 15px; margin-right: 8px; border: 1px solid #777; border-radius: 3px; font-size: 13px; line-height: 12px; text-align: center; vertical-align: -2px; }
.rebar { font-size: 13px; position: relative; top: -2px; margin-right: 1px; }
.pfoot { flex: 1; display: flex; }
.pfoot span { width: 28px; background: #eeeff0; }

.split { width: 6px; flex: none; background: #e9e9e9; padding-top: 332px; }
.grip { height: 124px; margin-left: 1px; background: #6f7780; display: flex; align-items: center; justify-content: center; }
.grip i { width: 0; height: 0; border-style: solid; border-width: 5px 4px 5px 0; border-color: transparent #bcc2c8 transparent transparent; }

.cad { width: 1112px; height: 710px; flex: none; }
.axn text { fill: #ececec; font-family: "DejaVu Sans", sans-serif; font-size: 20px; text-anchor: middle; }
.yaxis { fill: #00e000; font-family: "DejaVu Sans", sans-serif; font-size: 17px; text-anchor: middle; }

.annot { position: absolute; left: 0; top: 0; width: 1740px; height: 856px; pointer-events: none; }
```
